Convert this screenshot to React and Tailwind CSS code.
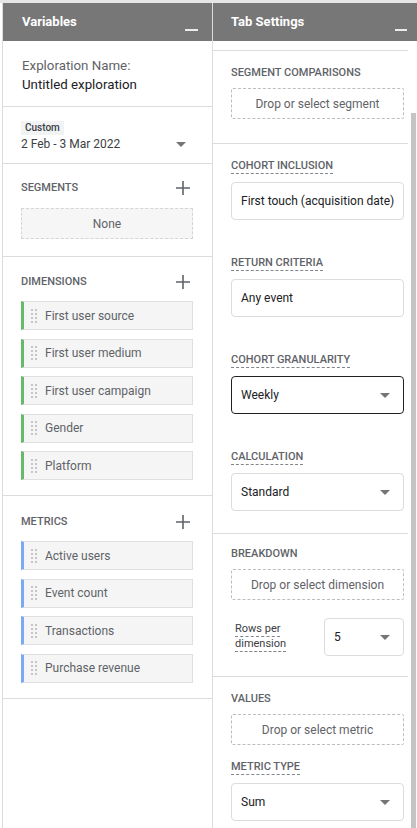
import React from "react";

const Plus = () => (
  <svg width="14" height="14" viewBox="0 0 14 14" className="block">
    <path d="M7 0v14M0 7h14" stroke="#5f6368" strokeWidth="1.6" />
  </svg>
);

const Caret = () => (
  <svg width="10" height="5" viewBox="0 0 10 5" className="block">
    <path d="M0 0h10L5 5z" fill="#757575" />
  </svg>
);

const Handle = () => (
  <div className="grid grid-cols-2 gap-x-[2px] gap-y-[2px] w-[6px] shrink-0">
    {Array.from({ length: 8 }).map((_, i) => (
      <span key={i} className="block w-[2px] h-[2px] bg-[#c6c6c6]" />
    ))}
  </div>
);

const Header = ({ title, pl, pr, barW }) => (
  <div className={`shrink-0 flex justify-between h-[38px] bg-[#777777] ${pl} ${pr}`}>
    <div className="flex items-center text-[13px] font-bold text-white">{title}</div>
    <div className="self-end pb-[10px]">
      <div className={`h-[2px] bg-[#ececec] ${barW}`} />
    </div>
  </div>
);

const Item = ({ label, accent }) => (
  <div className={`flex items-center h-[29px] bg-[#f5f5f5] border border-[#e0e0e0] border-l-[3px] ${accent}`}>
    <div className="ml-[7px]">
      <Handle />
    </div>
    <span className="ml-[8px] text-[12px] text-[#5f6368]">{label}</span>
  </div>
);

const SecHead = ({ children }) => (
  <div className="flex items-center justify-between h-[16px]">
    <span className="text-[11px] font-medium text-[#5f6368] leading-[16px]">{children}</span>
    <div className="mr-[3px]">
      <Plus />
    </div>
  </div>
);

const DashLabel = ({ children }) => (
  <div className="flex">
    <span className="block text-[11px] font-medium text-[#5f6368] leading-[14px] border-b border-dashed border-[#80868b]">
      {children}
    </span>
  </div>
);

const Plain = ({ children }) => (
  <div className="text-[11px] font-medium text-[#5f6368] leading-[14px]">{children}</div>
);

const DropBox = ({ children }) => (
  <div className="mt-[8px] h-[31px] flex items-center justify-center border border-dashed border-[#bdbdbd] rounded-[2px] text-[12px] text-[#5f6368]">
    {children}
  </div>
);

const Field = ({ children, caret, dark }) => (
  <div
    className={`mt-[8px] h-[38px] flex items-center justify-between pl-[9px] pr-[13px] rounded-[4px] border ${
      dark ? "border-[#202124]" : "border-[#dadce0]"
    } text-[12px] text-[#202124]`}
  >
    <span className="whitespace-nowrap">{children}</span>
    {caret && <Caret />}
  </div>
);

export default function App() {
  return (
    <div className="w-[417px] h-[828px] overflow-hidden flex bg-white border-t-[3px] border-[#e6e6e6] font-['Roboto',sans-serif]">
      {/* Left column */}
      <div className="flex flex-col w-[211px] ml-[2px] border-l border-r border-[#dadce0]">
        <Header title="Variables" pl="pl-[19px]" pr="pr-[14px]" barW="w-[13px]" />

        <div className="shrink-0 pt-[15px] pb-[12px] pl-[19px] pr-[19px] border-b border-[#dadce0] text-[13.3px] leading-[19px]">
          <div className="text-[#5f6368]">Exploration Name:</div>
          <div className="text-[#202124]">Untitled exploration</div>
        </div>

        <div className="shrink-0 pt-[14px] pb-[11px] pl-[18px] pr-[19px] border-b border-[#dadce0]">
          <div className="flex">
            <div className="h-[14px] px-[4px] bg-[#f1f3f4] text-[10px] leading-[14px] font-medium text-[#3c4043]">
              Custom
            </div>
          </div>
          <div className="mt-[1px] flex items-center justify-between h-[16px]">
            <span className="text-[12px] text-[#3c4043] leading-[16px]">2 Feb - 3 Mar 2022</span>
            <div className="mr-[7px]">
              <Caret />
            </div>
          </div>
        </div>

        <div className="shrink-0 pt-[16px] pb-[17px] pl-[18px] pr-[19px] border-b border-[#dadce0]">
          <SecHead>SEGMENTS</SecHead>
          <div className="mt-[12px] h-[31px] flex items-center justify-center bg-[#f6f6f6] border border-dashed border-[#d5d5d5] text-[12px] text-[#5f6368]">
            None
          </div>
        </div>

        <div className="shrink-0 pt-[17px] pb-[15px] pl-[18px] pr-[19px] border-b border-[#dadce0]">
          <SecHead>DIMENSIONS</SecHead>
          <div className="mt-[11px] flex flex-col gap-[8.5px]">
            {["First user source", "First user medium", "First user campaign", "Gender", "Platform"].map((l) => (
              <Item key={l} label={l} accent="border-l-[#66bb6a]" />
            ))}
          </div>
        </div>

        <div className="shrink-0 pt-[18px] pb-[15px] pl-[18px] pr-[19px] border-b border-[#dadce0]">
          <SecHead>METRICS</SecHead>
          <div className="mt-[11px] flex flex-col gap-[8.5px]">
            {["Active users", "Event count", "Transactions", "Purchase revenue"].map((l) => (
              <Item key={l} label={l} accent="border-l-[#7aaaf3]" />
            ))}
          </div>
        </div>
        <div className="flex-1" />
      </div>

      {/* Right column */}
      <div className="flex flex-col w-[204px] min-h-0">
        <Header title="Tab Settings" pl="pl-[18px]" pr="pr-[10px]" barW="w-[12px]" />
        <div className="flex flex-1 min-h-0 overflow-hidden">
          <div className="w-[195px] shrink-0 flex flex-col">
            <div className="shrink-0 h-[10px] border-b border-[#dadce0]" />

            <div className="shrink-0 pt-[15px] pb-[24px] pl-[18px] pr-[4px] border-b border-[#dadce0]">
              <Plain>SEGMENT COMPARISONS</Plain>
              <DropBox>Drop or select segment</DropBox>
            </div>

            <div className="shrink-0 pt-[15px] pb-[22px] pl-[18px] pr-[4px] border-b border-[#dadce0] flex flex-col gap-[36px]">
              <div>
                <DashLabel>COHORT INCLUSION</DashLabel>
                <Field>First touch (acquisition date)</Field>
              </div>
              <div>
                <DashLabel>RETURN CRITERIA</DashLabel>
                <Field>Any event</Field>
              </div>
              <div>
                <DashLabel>COHORT GRANULARITY</DashLabel>
                <Field caret dark>
                  Weekly
                </Field>
              </div>
              <div>
                <DashLabel>CALCULATION</DashLabel>
                <Field caret>Standard</Field>
              </div>
            </div>

            <div className="shrink-0 pt-[13px] pb-[20px] pl-[18px] pr-[4px] border-b border-[#dadce0]">
              <Plain>BREAKDOWN</Plain>
              <DropBox>Drop or select dimension</DropBox>
              <div className="mt-[18px] flex items-center justify-between">
                <div className="pl-[4px] flex flex-col items-start text-[11px] leading-[14px] text-[#3c4043]">
                  <span className="block border-b border-dashed border-[#80868b]">Rows per</span>
                  <span className="block border-b border-dashed border-[#80868b]">dimension</span>
                </div>
                <div className="w-[80px] h-[38px] flex items-center justify-between pl-[9px] pr-[13px] rounded-[4px] border border-[#dadce0] text-[12px] text-[#202124]">
                  <span>5</span>
                  <Caret />
                </div>
              </div>
            </div>

            <div className="shrink-0 pt-[15px] pl-[18px] pr-[4px]">
              <Plain>VALUES</Plain>
              <DropBox>Drop or select metric</DropBox>
              <div className="mt-[15px]">
                <DashLabel>METRIC TYPE</DashLabel>
                <Field caret>Sum</Field>
              </div>
            </div>
          </div>
          <div className="w-[9px] flex flex-col pt-[72px]">
            <div className="flex-1 ml-[3px] w-[5px] bg-[#c4c4c4]" />
          </div>
        </div>
      </div>
    </div>
  );
}
